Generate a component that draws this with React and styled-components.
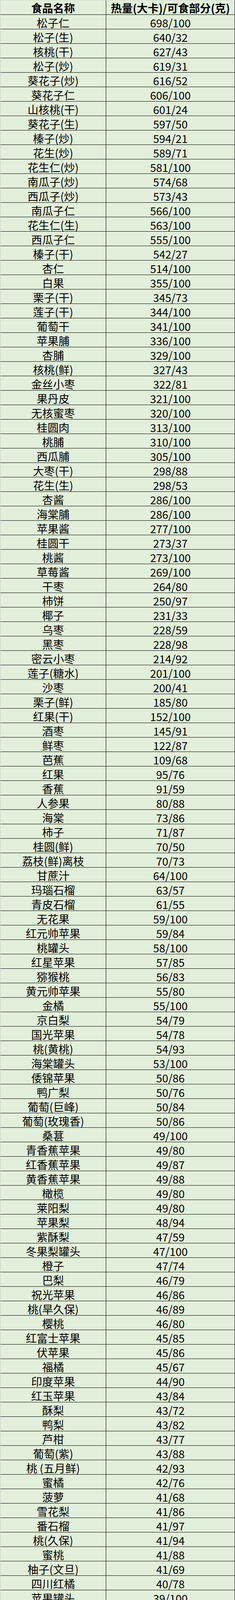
import React from "react";
import styled, { createGlobalStyle } from "styled-components";

const GlobalStyle = createGlobalStyle`
  html, body {
    margin: 0;
    padding: 0;
    background: #e2efda;
  }
  body {
    font-family: "Noto Sans CJK SC", "Noto Sans", sans-serif;
    color: #000;
  }
`;

const Sheet = styled.div`
  width: 602px;
  box-sizing: border-box;
  border-left: 1px solid #c8c8c8;
  border-top: 1px solid #d4d4d4;
  background: #e2efda;
`;

const Row = styled.div`
  display: grid;
  grid-template-columns: 271px 330px;
  height: 37px;
  box-sizing: border-box;
  border-bottom: 1px solid #000;
`;

const Cell = styled.div`
  box-sizing: border-box;
  border-right: 1px solid #000;
  height: 36px;
  display: flex;
  align-items: center;
  justify-content: center;
  padding-top: ${(p) => (p.$head ? "2px" : "3px")};
  line-height: 1;
  white-space: nowrap;
  font-size: 28px;
  font-weight: ${(p) => (p.$head ? 700 : 400)};
  font-family: "Noto Sans CJK SC", sans-serif;
`;

const data = [
  ["松子仁", "698/100"],
  ["松子(生)", "640/32"],
  ["核桃(干)", "627/43"],
  ["松子(炒)", "619/31"],
  ["葵花子(炒)", "616/52"],
  ["葵花子仁", "606/100"],
  ["山核桃(干)", "601/24"],
  ["葵花子(生)", "597/50"],
  ["榛子(炒)", "594/21"],
  ["花生(炒)", "589/71"],
  ["花生仁(炒)", "581/100"],
  ["南瓜子(炒)", "574/68"],
  ["西瓜子(炒)", "573/43"],
  ["南瓜子仁", "566/100"],
  ["花生仁(生)", "563/100"],
  ["西瓜子仁", "555/100"],
  ["榛子(干)", "542/27"],
  ["杏仁", "514/100"],
  ["白果", "355/100"],
  ["栗子(干)", "345/73"],
  ["莲子(干)", "344/100"],
  ["葡萄干", "341/100"],
  ["苹果脯", "336/100"],
  ["杏脯", "329/100"],
  ["核桃(鲜)", "327/43"],
  ["金丝小枣", "322/81"],
  ["果丹皮", "321/100"],
  ["无核蜜枣", "320/100"],
  ["桂圆肉", "313/100"],
  ["桃脯", "310/100"],
  ["西瓜脯", "305/100"],
  ["大枣(干)", "298/88"],
  ["花生(生)", "298/53"],
  ["杏酱", "286/100"],
  ["海棠脯", "286/100"],
  ["苹果酱", "277/100"],
  ["桂圆干", "273/37"],
  ["桃酱", "273/100"],
  ["草莓酱", "269/100"],
  ["干枣", "264/80"],
  ["柿饼", "250/97"],
  ["椰子", "231/33"],
  ["乌枣", "228/59"],
  ["黑枣", "228/98"],
  ["密云小枣", "214/92"],
  ["莲子(糖水)", "201/100"],
  ["沙枣", "200/41"],
  ["栗子(鲜)", "185/80"],
  ["红果(干)", "152/100"],
  ["酒枣", "145/91"],
  ["鲜枣", "122/87"],
  ["芭蕉", "109/68"],
  ["红果", "95/76"],
  ["香蕉", "91/59"],
  ["人参果", "80/88"],
  ["海棠", "73/86"],
  ["柿子", "71/87"],
  ["桂圆(鲜)", "70/50"],
  ["荔枝(鲜)离枝", "70/73"],
  ["甘蔗汁", "64/100"],
  ["玛瑙石榴", "63/57"],
  ["青皮石榴", "61/55"],
  ["无花果", "59/100"],
  ["红元帅苹果", "59/84"],
  ["桃罐头", "58/100"],
  ["红星苹果", "57/85"],
  ["猕猴桃", "56/83"],
  ["黄元帅苹果", "55/80"],
  ["金橘", "55/100"],
  ["京白梨", "54/79"],
  ["国光苹果", "54/78"],
  ["桃(黄桃)", "54/93"],
  ["海棠罐头", "53/100"],
  ["倭锦苹果", "50/86"],
  ["鸭广梨", "50/76"],
  ["葡萄(巨峰)", "50/84"],
  ["葡萄(玫瑰香)", "50/86"],
  ["桑葚", "49/100"],
  ["青香蕉苹果", "49/80"],
  ["红香蕉苹果", "49/87"],
  ["黄香蕉苹果", "49/88"],
  ["橄榄", "49/80"],
  ["莱阳梨", "49/80"],
  ["苹果梨", "48/94"],
  ["紫酥梨", "47/59"],
  ["冬果梨罐头", "47/100"],
  ["橙子", "47/74"],
  ["巴梨", "46/79"],
  ["祝光苹果", "46/86"],
  ["桃(旱久保)", "46/89"],
  ["樱桃", "46/80"],
  ["红富士苹果", "45/85"],
  ["伏苹果", "45/86"],
  ["福橘", "45/67"],
  ["印度苹果", "44/90"],
  ["红玉苹果", "43/84"],
  ["酥梨", "43/72"],
  ["鸭梨", "43/82"],
  ["芦柑", "43/77"],
  ["葡萄(紫)", "43/88"],
  ["桃 (五月鲜)", "42/93"],
  ["蜜橘", "42/76"],
  ["菠萝", "41/68"],
  ["雪花梨", "41/86"],
  ["番石榴", "41/97"],
  ["桃(久保)", "41/94"],
  ["蜜桃", "41/88"],
  ["柚子(文旦)", "41/69"],
  ["四川红橘", "40/78"],
  ["苹果罐头", "39/100"],
  ["枇杷", "39/62"],
  ["小叶橘", "38/81"],
  ["冬果梨", "37/87"],
  ["杏子罐头", "37/100"],
  ["杏", "36/91"],
  ["李子", "36/91"],
  ["柠檬", "35/66"],
  ["李子杏", "35/92"],
  ["哈密瓜", "34/71"],
  ["西瓜(京欣一号)", "34/59"],
  ["糖水梨罐头", "33/100"],
  ["芒果", "32/60"],
  ["草莓", "30/97"],
  ["红肖梨", "30/87"],
  ["杨桃", "29/88"],
  ["杨梅", "28/82"],
  ["库尔勒梨", "28/91"],
  ["柠檬汁", "26/100"],
  ["香瓜", "26/78"],
  ["西瓜(郑州三号)", "25/59"],
  ["白兰瓜", "21/55"],
];

export default function App() {
  return (
    <>
      <GlobalStyle />
      <Sheet>
        <Row>
          <Cell $head>食品名称</Cell>
          <Cell $head>热量(大卡)/可食部分(克)</Cell>
        </Row>
        {data.map(([name, val], i) => (
          <Row key={i}>
            <Cell>{name}</Cell>
            <Cell>{val}</Cell>
          </Row>
        ))}
      </Sheet>
    </>
  );
}
